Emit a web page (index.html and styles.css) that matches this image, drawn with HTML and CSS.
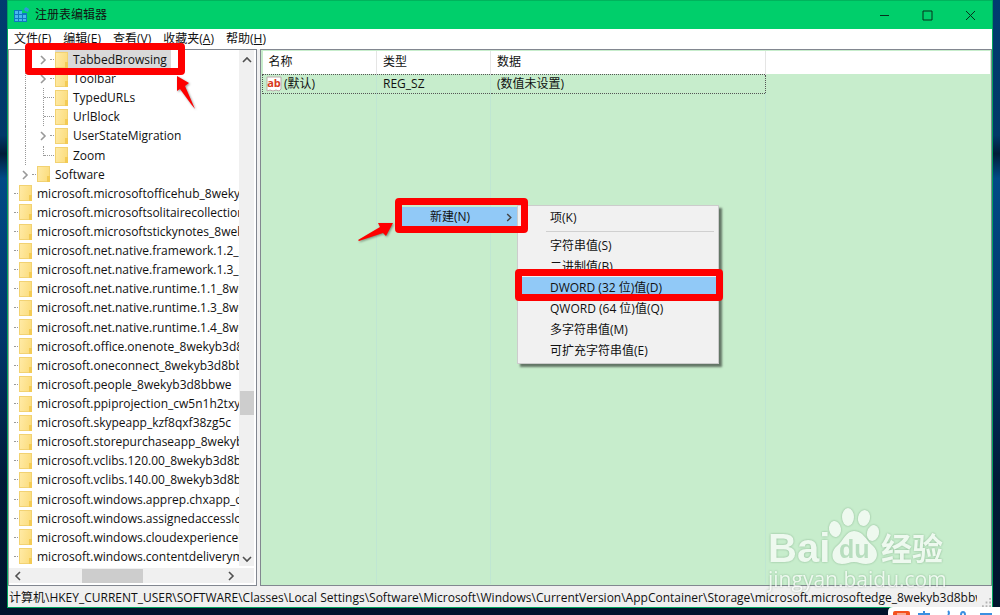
FILE: index.html
```
<!DOCTYPE html>
<html lang="zh-CN">
<head>
  <meta charset="UTF-8">
  <meta name="viewport" content="width=device-width, initial-scale=1.0">
  <title>注册表编辑器</title>
  <link rel="stylesheet" href="styles.css">
</head>
<body>
  <svg class="defs" aria-hidden="true">
    <symbol id="chev" viewBox="0 0 8 10"><path d="M2 1l4 4-4 4" fill="none" stroke="currentColor" stroke-width="1.6"/></symbol>
  </svg>

  <div class="window">
    <header class="titlebar">
      <svg class="app-icon" viewBox="0 0 16 16">
        <path d="M0 3h8v3h5v9H0z" fill="#0f78c0"/>
        <path d="M1 4h3v3H1zM5 4h3v3H5zM1 8h3v3H1zM5 8h3v3H5zM9 8h3v3H9zM1 12h3v2H1zM5 12h3v2H5zM9 12h3v2H9z" fill="#49b8ee"/>
        <path d="M12 0l3 2-1 3-3-1-1-2z" fill="#2c9bdc"/>
      </svg>
      <h1>注册表编辑器</h1>
      <div class="controls">
        <button aria-label="最小化"><svg viewBox="0 0 11 11"><path d="M1 5.5h9"/></svg></button>
        <button aria-label="最大化"><svg viewBox="0 0 11 11"><path d="M1 1h9v9H1z"/></svg></button>
        <button aria-label="关闭"><svg viewBox="0 0 11 11"><path d="M1 1l9 9M10 1l-9 9"/></svg></button>
      </div>
    </header>

    <nav class="menubar">
      <button>文件(<u>F</u>)</button>
      <button>编辑(<u>E</u>)</button>
      <button>查看(<u>V</u>)</button>
      <button>收藏夹(<u>A</u>)</button>
      <button>帮助(<u>H</u>)</button>
    </nav>

    <main class="panes">
      <section class="tree-pane">
        <ul class="tree">
          <li><i class="guide"></i><i class="branch open"><svg><use href="#chev"/></svg></i><span class="key selected"><i class="folder"></i>TabbedBrowsing</span></li>
          <li><i class="guide"></i><i class="branch open"><svg><use href="#chev"/></svg></i><span class="key"><i class="folder"></i>Toolbar</span></li>
          <li><i class="guide"></i><i class="branch line"></i><span class="key"><i class="folder"></i>TypedURLs</span></li>
          <li><i class="guide"></i><i class="branch line"></i><span class="key"><i class="folder"></i>UrlBlock</span></li>
          <li><i class="guide"></i><i class="branch open"><svg><use href="#chev"/></svg></i><span class="key"><i class="folder"></i>UserStateMigration</span></li>
          <li><i class="guide"></i><i class="branch line last"></i><span class="key"><i class="folder"></i>Zoom</span></li>
          <li><i class="branch open"><svg><use href="#chev"/></svg></i><span class="key"><i class="folder"></i>Software</span></li>
          <li class="root"><i class="branch"></i><span class="key"><i class="folder"></i>microsoft.microsoftofficehub_8wekyb3d8bbwe</span></li>
          <li class="root"><i class="branch"></i><span class="key"><i class="folder"></i>microsoft.microsoftsolitairecollection_8wekyb3d8bbwe</span></li>
          <li class="root"><i class="branch"></i><span class="key"><i class="folder"></i>microsoft.microsoftstickynotes_8wekyb3d8bbwe</span></li>
          <li class="root"><i class="branch"></i><span class="key"><i class="folder"></i>microsoft.net.native.framework.1.2_8wekyb3d8bbwe</span></li>
          <li class="root"><i class="branch"></i><span class="key"><i class="folder"></i>microsoft.net.native.framework.1.3_8wekyb3d8bbwe</span></li>
          <li class="root"><i class="branch"></i><span class="key"><i class="folder"></i>microsoft.net.native.runtime.1.1_8wekyb3d8bbwe</span></li>
          <li class="root"><i class="branch"></i><span class="key"><i class="folder"></i>microsoft.net.native.runtime.1.3_8wekyb3d8bbwe</span></li>
          <li class="root"><i class="branch"></i><span class="key"><i class="folder"></i>microsoft.net.native.runtime.1.4_8wekyb3d8bbwe</span></li>
          <li class="root"><i class="branch"></i><span class="key"><i class="folder"></i>microsoft.office.onenote_8wekyb3d8bbwe</span></li>
          <li class="root"><i class="branch"></i><span class="key"><i class="folder"></i>microsoft.oneconnect_8wekyb3d8bbwe</span></li>
          <li class="root"><i class="branch"></i><span class="key"><i class="folder"></i>microsoft.people_8wekyb3d8bbwe</span></li>
          <li class="root"><i class="branch"></i><span class="key"><i class="folder"></i>microsoft.ppiprojection_cw5n1h2txyewy</span></li>
          <li class="root"><i class="branch"></i><span class="key"><i class="folder"></i>microsoft.skypeapp_kzf8qxf38zg5c</span></li>
          <li class="root"><i class="branch"></i><span class="key"><i class="folder"></i>microsoft.storepurchaseapp_8wekyb3d8bbwe</span></li>
          <li class="root"><i class="branch"></i><span class="key"><i class="folder"></i>microsoft.vclibs.120.00_8wekyb3d8bbwe</span></li>
          <li class="root"><i class="branch"></i><span class="key"><i class="folder"></i>microsoft.vclibs.140.00_8wekyb3d8bbwe</span></li>
          <li class="root"><i class="branch"></i><span class="key"><i class="folder"></i>microsoft.windows.apprep.chxapp_cw5n1h2txyewy</span></li>
          <li class="root"><i class="branch"></i><span class="key"><i class="folder"></i>microsoft.windows.assignedaccesslockapp_cw5n1h2txyewy</span></li>
          <li class="root"><i class="branch"></i><span class="key"><i class="folder"></i>microsoft.windows.cloudexperiencehost_cw5n1h2txyewy</span></li>
          <li class="root"><i class="branch"></i><span class="key"><i class="folder"></i>microsoft.windows.contentdeliverymanager_cw5n1h2txyewy</span></li>
        </ul>
        <div class="scroll-y">
          <svg class="up"><use href="#chev"/></svg>
          <i class="thumb"></i>
          <svg class="down"><use href="#chev"/></svg>
        </div>
        <div class="scroll-x">
          <svg class="left"><use href="#chev"/></svg>
          <i class="thumb"></i>
          <svg><use href="#chev"/></svg>
        </div>
      </section>

      <section class="list-pane">
        <table>
          <colgroup><col class="c-name"><col class="c-type"><col class="c-data"><col></colgroup>
          <thead>
            <tr><th>名称</th><th>类型</th><th>数据</th><th></th></tr>
          </thead>
          <tbody>
            <tr class="value">
              <td class="first"><svg class="ab" viewBox="0 0 16 16"><path d="M1 1h14v12l-2 2-3-1-3 1-3-1-3 1z" fill="#fff" stroke="#b9a9a9"/><text x="8" y="11">ab</text></svg>(默认)</td>
              <td>REG_SZ</td>
              <td>(数值未设置)</td>
              <td></td>
            </tr>
            <tr class="filler"><td></td><td></td><td></td><td></td></tr>
          </tbody>
        </table>
      </section>
    </main>

    <footer class="statusbar">
      <span>计算机\HKEY_CURRENT_USER\SOFTWARE\Classes\Local Settings\Software\Microsoft\Windows\CurrentVersion\AppContainer\Storage\microsoft.microsoftedge_8wekyb3d8bbwe\MicrosoftEdge</span>
      <svg class="grip" viewBox="0 0 10 10"><path d="M8 0h2v2H8zM4 4h2v2H4zM8 4h2v2H8zM0 8h2v2H0zM4 8h2v2H4zM8 8h2v2H8z" fill="#b4b4b4"/></svg>
    </footer>
  </div>

  <!-- 右键菜单 -->
  <button class="parent-item">新建(N)<svg><use href="#chev"/></svg></button>
  <div class="submenu">
    <button>项(K)</button>
    <hr>
    <button>字符串值(S)</button>
    <button>二进制值(B)</button>
    <button class="active">DWORD (32 位)值(D)</button>
    <button>QWORD (64 位)值(Q)</button>
    <button>多字符串值(M)</button>
    <button>可扩充字符串值(E)</button>
  </div>

  <!-- 红色标注 -->
  <i class="mark mark-key"></i>
  <i class="mark mark-new"></i>
  <i class="mark mark-dword"></i>
  <svg class="arrow arrow-key" viewBox="0 0 20 34"><path d="M1 0L13 7 9 10 19 33 15 28 4 13 1 15z"/></svg>
  <svg class="arrow arrow-new" viewBox="0 0 36 20"><path d="M35 1L28 14 25 11 1 19 0 18 22 5 20 1z"/></svg>

  <svg class="watermark" viewBox="0 0 180 84">
    <g class="logo">
      <text class="bai" x="0" y="54">Bai</text>
      <ellipse cx="67" cy="21" rx="6" ry="8" transform="rotate(-10 67 21)"/>
      <ellipse cx="80" cy="9" rx="6" ry="9"/>
      <ellipse cx="96" cy="10" rx="6" ry="8" transform="rotate(12 96 10)"/>
      <ellipse cx="105" cy="25" rx="6" ry="8" transform="rotate(14 105 25)"/>
      <path d="M86 23C95 23 98 32 104 37 113 45 109 56 98 56 93 56 90 54 86 54 82 54 79 56 74 56 64 56 61 45 69 38 76 32 78 23 86 23z"/>
      <text class="cn" x="113" y="52">经验</text>
    </g>
    <text class="du" x="71" y="50">du</text>
    <text class="url" x="0" y="79">jingyan.baidu.com</text>
  </svg>

  <svg class="ime" viewBox="0 0 112 8">
    <path d="M0 8V5q0-5 5-5h107v8z" fill="#fff"/>
    <path d="M5 8V6q0-2 2-2h13q2 0 2 2v2z" fill="#f4511e"/>
    <path d="M9 7h9" stroke="#fff"/>
    <path d="M30 7h12M36 4v4M60 4q2 2 0 4M73 8q0-3 2-3t2 3M92 7h12" fill="none" stroke="#3b8fe0" stroke-width="2"/>
  </svg>
</body>
</html>
```
FILE: styles.css
```
* {
  box-sizing: border-box;
}
body {
  margin: 0;
  height: 100vh;
  padding: 0 7px 7px;
  overflow: hidden;
  position: relative;
  font-family: "Open Sans", "Noto Sans CJK SC", sans-serif;
  font-size: 12px;
  line-height: 18px;
  color: #111;
  background: linear-gradient(#003c70, #003868 22%, #001c38 25%, #004a86 29%, #00356a 55%, #001a38 78%, #00142c);
}
button {
  font: inherit;
  color: inherit;
  border: 0;
  padding: 0;
  background: none;
}
svg {
  display: block;
}
.defs {
  position: absolute;
  width: 0;
  height: 0;
}

/* Ventana */
.window {
  height: 100%;
  display: flex;
  flex-direction: column;
  background: #fff;
  border: 1px solid #00a35c;
  border-top: 0;
}
.titlebar {
  display: flex;
  align-items: center;
  height: 29px;
  flex: none;
  padding-left: 6px;
  background: #00cf6b;
  border-top: 1px solid #00b35c;
}
.app-icon {
  width: 16px;
  height: 16px;
}
.titlebar h1 {
  margin: 0 auto 0 5px;
  font-size: 12px;
  font-weight: normal;
}
.controls {
  display: flex;
}
.controls button {
  width: 43px;
  height: 28px;
  display: grid;
  place-items: center;
}
.controls svg {
  width: 11px;
  height: 11px;
  fill: none;
  stroke: #06301c;
}
.menubar {
  display: flex;
  flex: none;
  height: 20px;
  gap: 12px;
  padding-left: 6px;
}

/* Paneles */
.panes {
  flex: 1;
  min-height: 0;
  display: flex;
  gap: 3px;
  background: #f0f0f0;
}
.tree-pane {
  width: 249px;
  flex: none;
  display: grid;
  grid-template: 1fr 19px / 1fr 17px;
  background: #fff;
  border: 1px solid #828790;
  border-left-color: #a0a0a0;
}
.tree {
  margin: 0;
  padding: 0;
  list-style: none;
  min-width: 0;
  min-height: 0;
  overflow: hidden;
  display: grid;
  grid-auto-rows: 1fr;
  white-space: nowrap;
}
.tree li {
  display: flex;
  min-height: 0;
  padding-left: 16px;
  line-height: 19px;
}
.tree li.root {
  padding-left: 0;
}
.guide {
  width: 18px;
  flex: none;
  border-left: 1px dotted #999;
}
.branch {
  position: relative;
  width: 12px;
  flex: none;
}
.root .branch {
  width: 10px;
}
.branch::after {
  content: "";
  position: absolute;
  right: 1px;
  top: 9px;
  width: 4px;
  border-top: 1px dotted #999;
}
.branch.line::after {
  width: 10px;
}
.branch.line::before {
  content: "";
  position: absolute;
  left: 0;
  top: 0;
  bottom: 0;
  border-left: 1px dotted #999;
}
.branch.last::before {
  bottom: 9px;
}
.branch svg {
  width: 8px;
  height: 10px;
  margin: 5px 0 0 -4px;
  color: #999;
}
.key {
  display: flex;
  align-items: center;
  gap: 5px;
  padding-right: 4px;
}
.key.selected {
  background: #d9d9d9;
}
.folder {
  position: relative;
  width: 13px;
  height: 16px;
  flex: none;
  border: 1px solid #f2d272;
  background: linear-gradient(100deg, #ffeaa5, #fbdc7c);
}
.folder::after {
  content: "";
  position: absolute;
  right: -1px;
  bottom: -1px;
  width: 3px;
  height: 6px;
  background: #f3cb55;
}
.scroll-y,
.scroll-x {
  display: flex;
  align-items: center;
  background: #f0f0f0;
  color: #505050;
}
.scroll-y {
  flex-direction: column;
  padding: 5px 0 2px;
  margin-right: 2px;
}
.scroll-x {
  grid-column: 1 / 3;
  padding: 0 19px 0 5px;
  margin: 2px 2px 2px 0;
}
.scroll-y svg,
.scroll-x svg {
  width: 8px;
  height: 10px;
}
.scroll-y .thumb {
  width: 14px;
  height: 24px;
  margin: auto 0 139px;
  background: #cdcdcd;
}
.scroll-x .thumb {
  width: 61px;
  height: 14px;
  margin: 0 auto 0 60px;
  background: #cdcdcd;
}
.up {
  transform: rotate(-90deg);
}
.down {
  transform: rotate(90deg);
}
.left {
  transform: rotate(180deg);
}

/* Lista de valores */
.list-pane {
  flex: 1;
  min-width: 0;
  padding: 1px;
  background: #c7edcc;
  border: 1px solid #828790;
}
.list-pane table {
  width: 100%;
  height: 100%;
  table-layout: fixed;
  border-collapse: collapse;
}
.c-name,
.c-type {
  width: 114px;
}
.c-data {
  width: 275px;
}
th, td {
  padding: 0 6px;
  text-align: left;
  font-weight: normal;
  white-space: nowrap;
  border-right: 1px solid #bfe6d2;
}
th:last-child, td:last-child {
  border-right: 0;
}
th {
  height: 23px;
  background: #fff;
  border-right-color: #e5e5e5;
}
.value td {
  height: 19px;
  line-height: 17px;
  border-top: 1px dotted #555;
  border-bottom: 1px dotted #555;
}
.value td.first {
  padding: 0 3px;
  border-left: 1px dotted #555;
}
.value td:nth-child(3) {
  border-right: 1px dotted #555;
}
.value td:last-child {
  border: 0;
}
.ab {
  display: inline-block;
  width: 16px;
  height: 16px;
  margin-right: 2px;
  vertical-align: middle;
}
.ab text {
  font: bold 11px "Open Sans", sans-serif;
  text-anchor: middle;
  fill: #d8391c;
}
.filler td {
  height: auto;
}

.statusbar {
  flex: none;
  height: 21px;
  display: flex;
  align-items: flex-end;
  padding: 0 1px;
  background: #f0f0f0;
}
.statusbar span {
  flex: 1;
  min-width: 0;
  margin-right: 5px;
  line-height: 19px;
  overflow: hidden;
  white-space: nowrap;
}
.grip {
  width: 9px;
  height: 9px;
}

/* Menu contextual */
.parent-item {
  position: absolute;
  left: 402px;
  top: 207px;
  width: 115px;
  height: 20px;
  display: flex;
  align-items: center;
  justify-content: space-between;
  padding: 0 4px 0 28px;
  background: #91c9f7;
}
.parent-item svg {
  width: 8px;
  height: 9px;
  color: #444;
}
.submenu {
  position: absolute;
  left: 517px;
  top: 205px;
  width: 202px;
  padding: 1px 2px 2px;
  display: flex;
  flex-direction: column;
  background: #f1f1f1;
  border: 1px solid #ccc;
  box-shadow: 3px 3px 2px rgba(0, 0, 0, 0.5);
}
.submenu button {
  height: 21px;
  padding-left: 30px;
  text-align: left;
}
.submenu hr {
  width: 168px;
  margin: 3px 0 3px 26px;
  border: 0;
  border-top: 1px solid #d0d0d0;
}
.submenu .active {
  background: #91c9f7;
}

/* Marcas rojas */
.mark {
  position: absolute;
  border: 7px solid #fe0000;
  border-radius: 4px;
}
.mark-key {
  left: 25px;
  top: 43px;
  width: 160px;
  height: 32px;
}
.mark-new {
  left: 395px;
  top: 198px;
  width: 133px;
  height: 35px;
}
.mark-dword {
  left: 515px;
  top: 269px;
  width: 208px;
  height: 32px;
}
.arrow {
  position: absolute;
  fill: #fe0000;
  filter: drop-shadow(1px 1px 1px rgba(0, 0, 0, 0.4));
}
.arrow-key {
  left: 176px;
  top: 76px;
  width: 20px;
  height: 34px;
}
.arrow-new {
  left: 358px;
  top: 222px;
  width: 36px;
  height: 20px;
}

.watermark {
  position: absolute;
  right: 52px;
  bottom: 23px;
  width: 180px;
  height: 84px;
  overflow: visible;
  fill: #fff;
  opacity: 0.7;
  filter: drop-shadow(0 0 1px rgba(60, 110, 70, 0.6));
}
.bai {
  font: bold 40px "Liberation Sans", sans-serif;
}
.cn {
  font: bold 31px "Noto Sans CJK SC", sans-serif;
}
.du {
  font: bold 25px "Liberation Sans", sans-serif;
  fill: #b3d9ba;
}
.url {
  font: 21px "Open Sans", sans-serif;
}
.ime {
  position: absolute;
  right: 0;
  bottom: 0;
  width: 112px;
  height: 8px;
}
```
